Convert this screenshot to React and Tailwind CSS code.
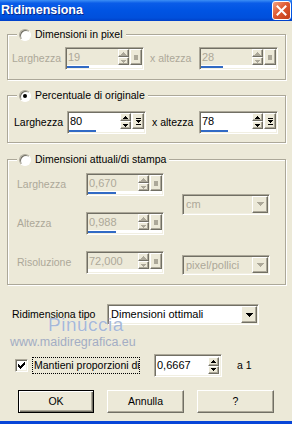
import React from 'react';

const sunken =
  "border border-t-[#aca899] border-l-[#aca899] border-r-white border-b-white shadow-[inset_1px_1px_0_#716f64,inset_-1px_-1px_0_#f1efe2]";
const raised =
  "border border-t-white border-l-white border-r-[#716f64] border-b-[#716f64] shadow-[inset_-1px_-1px_0_#aca899]";

// pixel triangles, so they stay crisp at 1x
const Tri = ({ up, color }) => (
  <svg width="5" height="3" viewBox="0 0 5 3" shapeRendering="crispEdges">
    {up ? (
      <>
        <rect x="2" y="0" width="1" height="1" fill={color} />
        <rect x="1" y="1" width="3" height="1" fill={color} />
        <rect x="0" y="2" width="5" height="1" fill={color} />
      </>
    ) : (
      <>
        <rect x="0" y="0" width="5" height="1" fill={color} />
        <rect x="1" y="1" width="3" height="1" fill={color} />
        <rect x="2" y="2" width="1" height="1" fill={color} />
      </>
    )}
  </svg>
);

const ComboTri = ({ color }) => (
  <svg width="7" height="4" viewBox="0 0 7 4" shapeRendering="crispEdges">
    <rect x="0" y="0" width="7" height="1" fill={color} />
    <rect x="1" y="1" width="5" height="1" fill={color} />
    <rect x="2" y="2" width="3" height="1" fill={color} />
    <rect x="3" y="3" width="1" height="1" fill={color} />
  </svg>
);

const BarArrow = () => (
  <svg width="5" height="7" viewBox="0 0 5 7" shapeRendering="crispEdges">
    <rect x="0" y="0" width="5" height="1" fill="#000" />
    <rect x="0" y="2" width="5" height="1" fill="#000" />
    <rect x="1" y="3" width="3" height="1" fill="#000" />
    <rect x="2" y="4" width="1" height="1" fill="#000" />
    <rect x="0" y="6" width="5" height="1" fill="#000" />
  </svg>
);

const Check = () => {
  const rows = [[[6, 1]], [[5, 2]], [[0, 1], [4, 3]], [[0, 2], [3, 3]], [[0, 5]], [[1, 3]], [[2, 1]]];
  return (
    <svg width="7" height="7" viewBox="0 0 7 7" shapeRendering="crispEdges">
      {rows.map((r, y) => r.map(([x, w], i) => <rect key={y + '-' + i} x={x} y={y} width={w} height="1" fill="#000" />))}
    </svg>
  );
};

const Radio = ({ checked }) => (
  <span className="relative inline-block w-[12px] h-[12px] shrink-0 rounded-full border border-t-[#aca899] border-l-[#aca899] border-r-white border-b-white bg-white shadow-[inset_1px_1px_0_#716f64]">
    {checked && <span className="absolute left-[3px] top-[3px] w-[4px] h-[4px] rounded-full bg-black" />}
  </span>
);

const SpinButtons = ({ color }) => (
  <div className="flex flex-col w-[11px]">
    <div className={`flex-1 ${raised} bg-[#ece9d8] flex items-center justify-center`}>
      <Tri up color={color} />
    </div>
    <div className={`flex-1 ${raised} bg-[#ece9d8] flex items-center justify-center`}>
      <Tri color={color} />
    </div>
  </div>
);

function SpinBox({ value, disabled, className, fill }) {
  const c = disabled ? '#aca899' : '#000';
  return (
    <div className={`${sunken} p-[1px] h-[23px] flex flex-col ${disabled ? 'bg-[#ece9d8]' : 'bg-white'} ${className}`}>
      <div className="flex flex-1 min-h-0">
        <span className={`flex-1 pl-[1px] text-[11px] leading-[16px] ${disabled ? 'text-[#aca899]' : 'text-black'}`}>
          {value}
        </span>
        <SpinButtons color={c} />
        <div className={`ml-[1px] w-[12px] ${raised} bg-[#ece9d8] flex items-center justify-center`}>
          {disabled ? <span className="w-[4px] h-[5px] bg-[#aca899]" /> : <BarArrow />}
        </div>
      </div>
      <div className="h-[3px] bg-white">
        <div className={`h-[2px] mt-[1px] bg-[#316ac5] ${fill}`} />
      </div>
    </div>
  );
}

function Combo({ value, disabled, className }) {
  return (
    <div className={`${sunken} p-[1px] flex ${disabled ? 'bg-[#ece9d8]' : 'bg-white'} ${className}`}>
      <span className={`flex-1 pl-[2px] text-[11px] leading-[17px] ${disabled ? 'text-[#aca899]' : 'text-black'}`}>
        {value}
      </span>
      <div className={`w-[16px] ${raised} bg-[#ece9d8] flex items-center justify-center`}>
        <ComboTri color={disabled ? '#aca899' : '#000'} />
      </div>
    </div>
  );
}

function Group({ label, checked, children, className }) {
  return (
    <fieldset
      className={`mx-[7px] w-[279px] border border-[#aca899] shadow-[inset_1px_1px_0_#fff,1px_1px_0_#fff] ${className}`}
    >
      <legend className="ml-[9px] pl-[2px] pr-[3px] bg-[#ece9d8]">
        <span className="flex items-center gap-[4px] h-[13px] leading-[13px] text-black">
          <Radio checked={checked} />
          {label}
        </span>
      </legend>
      {children}
    </fieldset>
  );
}

function Button({ children, isDefault, className }) {
  return (
    <button
      className={`h-[23px] text-[10.5px] text-black bg-[#ece9d8] ${
        isDefault
          ? 'border border-black shadow-[inset_1px_1px_0_#fff,inset_-1px_-1px_0_#716f64,inset_-2px_-2px_0_#aca899]'
          : raised
      } ${className}`}
    >
      {children}
    </button>
  );
}

export default function App() {
  return (
    <div className="relative w-[292px] h-[424px] overflow-hidden bg-[#ece9d8] flex flex-col font-['Liberation_Sans',Arial,sans-serif] text-[10.5px]">
      {/* Title bar */}
      <div className="h-[21px] shrink-0 flex items-center justify-between bg-[linear-gradient(to_bottom,#3c8ff5_0%,#0a5ce8_15%,#0054e3_50%,#0050dc_85%,#0040c8_100%)]">
        <span className="pl-[1px] text-white font-bold text-[12.5px] [text-shadow:1px_1px_0_#0a2a8a]">Ridimensiona</span>
        <div className="mr-[1px] w-[19px] h-[19px] rounded-[3px] border border-white bg-[linear-gradient(135deg,#f3a384_0%,#df5a32_45%,#c23c16_100%)] flex items-center justify-center">
          <svg width="11" height="11" viewBox="0 0 11 11">
            <path d="M1.5 1.5l8 8M9.5 1.5l-8 8" stroke="#fff" strokeWidth="2" strokeLinecap="square" />
          </svg>
        </div>
      </div>

      <div className="flex flex-col pt-[7px]">
        {/* Dimensioni in pixel */}
        <Group label="Dimensioni in pixel" className="pb-[9px]">
          <div className="flex items-center pt-[6px] pl-[4px] text-[#aca899]">
            <span className="w-[53px]">Larghezza</span>
            <SpinBox value="19" disabled className="w-[79px]" fill="w-[22px]" />
            <span className="w-[55px] pl-[6px]">x altezza</span>
            <SpinBox value="28" disabled className="w-[79px]" fill="w-[22px]" />
          </div>
        </Group>

        {/* Percentuale di originale */}
        <Group label="Percentuale di originale" checked className="mt-[9px] pb-[8px]">
          <div className="flex items-center pt-[9px] pl-[6px] text-black">
            <span className="w-[53px]">Larghezza</span>
            <SpinBox value="80" className="w-[79px]" fill="w-[27px]" />
            <span className="w-[53px] pl-[6px]">x altezza</span>
            <SpinBox value="78" className="w-[79px]" fill="w-[27px]" />
          </div>
        </Group>

        {/* Dimensioni attuali/di stampa */}
        <Group label="Dimensioni attuali/di stampa" className="mt-[10px] pb-[10px]">
          <div className="grid grid-cols-[69px_78px_88px] grid-rows-[23px_23px_23px] gap-y-[16px] pt-[7px] pl-[9px] text-[#aca899] items-center">
            <span className="col-start-1 row-start-1">Larghezza</span>
            <SpinBox value="0,670" disabled className="col-start-2 row-start-1" fill="w-[28px]" />
            <span className="col-start-1 row-start-2">Altezza</span>
            <SpinBox value="0,988" disabled className="col-start-2 row-start-2" fill="w-[28px]" />
            <span className="col-start-1 row-start-3">Risoluzione</span>
            <SpinBox value="72,000" disabled className="col-start-2 row-start-3" fill="w-[0px]" />
            <Combo value="cm" disabled className="col-start-3 row-start-1 row-span-2 self-center ml-[18px] w-[88px] h-[21px]" />
            <Combo value="pixel/pollici" disabled className="col-start-3 row-start-3 ml-[18px] w-[88px] h-[20px] mt-[4px]" />
          </div>
        </Group>

        {/* Ridimensiona tipo */}
        <div className="flex items-center mt-[19px] pl-[12px]">
          <span className="w-[95px]">Ridimensiona tipo</span>
          <Combo value="Dimensioni ottimali" className="w-[152px] h-[21px]" />
        </div>

        {/* Mantieni proporzioni */}
        <div className="flex items-center mt-[29px] pl-[15px]">
          <span className={`w-[13px] h-[13px] ${sunken} bg-white flex items-center justify-center`}>
            <Check />
          </span>
          <span className="ml-[4px] w-[108px] h-[17px] border border-dotted border-black overflow-hidden whitespace-nowrap leading-[15px] pl-[1px]">
            Mantieni proporzioni di
          </span>
          <div className={`ml-[14px] w-[68px] h-[23px] ${sunken} p-[1px] bg-white flex`}>
            <span className="flex-1 pl-[1px] text-[11px] leading-[19px]">0,6667</span>
            <div className="flex py-[1px] pr-[1px]">
              <SpinButtons color="#000" />
            </div>
          </div>
          <span className="ml-[15px]">a 1</span>
        </div>

        {/* Buttons */}
        <div className="flex items-center mt-[13px] pl-[18px] gap-[13px]">
          <Button isDefault className="w-[76px]">OK</Button>
          <Button className="w-[77px]">Annulla</Button>
          <Button className="w-[77px]">?</Button>
        </div>
      </div>

      <div className="mt-auto h-[3px] bg-[#0846d8]" />

      {/* watermark */}
      <span className="absolute left-[48px] top-[315px] text-[19px] leading-none text-[#a7b8d6] tracking-[0.5px] [text-shadow:0_0_1px_#fff]">
        Pinuccia
      </span>
      <span className="absolute left-[10px] top-[336px] text-[12.5px] leading-none text-[#a3adc4]">
        www.maidiregrafica.eu
      </span>
    </div>
  );
}
